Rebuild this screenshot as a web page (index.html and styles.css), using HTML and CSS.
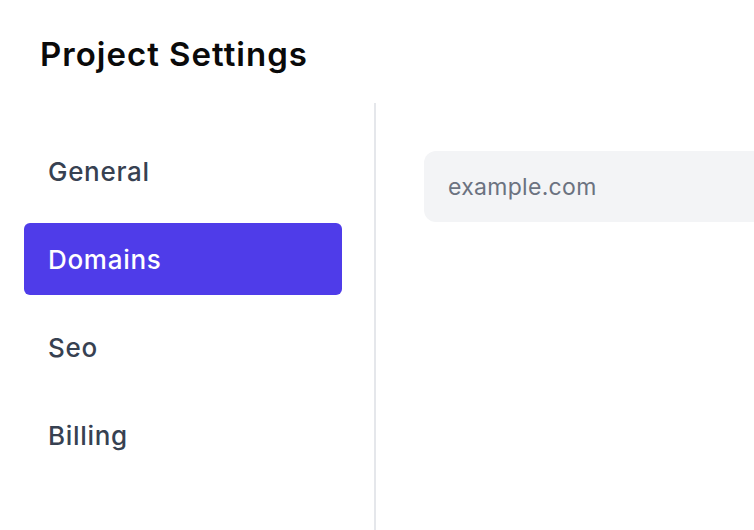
FILE: index.html
```html
<!DOCTYPE html>
<html lang="en">
<head>
<meta charset="utf-8">
<title>Project Settings</title>
<link rel="stylesheet" href="styles.css">
</head>
<body>
<div class="page">
  <header class="page-header">
    <h1 class="page-title">Project Settings</h1>
  </header>
  <div class="layout">
    <aside class="sidebar">
      <nav class="nav">
        <a class="nav-item" href="#">General</a>
        <a class="nav-item is-active" href="#">Domains</a>
        <a class="nav-item" href="#">Seo</a>
        <a class="nav-item" href="#">Billing</a>
      </nav>
    </aside>
    <main class="content">
      <input class="domain-input" type="text" placeholder="example.com">
    </main>
  </div>
</div>
</body>
</html>
```

FILE: styles.css
```css
html, body {
  margin: 0;
  padding: 0;
  height: 100%;
  background: #ffffff;
  overflow: hidden;
}

body {
  font-family: Inter, "Noto Sans", "Liberation Sans", sans-serif;
  -webkit-font-smoothing: antialiased;
}

.page {
  height: 100%;
  display: flex;
  flex-direction: column;
}

.page-header {
  padding: 34px 0 0 40px;
}

.page-title {
  margin: 0;
  font-size: 33px;
  line-height: 40px;
  font-weight: 600;
  color: #0a0a0a;
  letter-spacing: 1px;
}

.layout {
  margin-top: 29px;
  flex: 1;
  display: flex;
  min-height: 0;
}

.sidebar {
  width: 350px;
  flex: 0 0 350px;
  padding-left: 24px;
  border-right: 2px solid #e5e7eb;
}

.nav {
  width: 318px;
  padding-top: 32px;
  display: flex;
  flex-direction: column;
  gap: 16px;
}

.nav-item {
  display: flex;
  align-items: center;
  height: 72px;
  padding-left: 24px;
  border-radius: 6px;
  font-size: 26px;
  font-weight: 500;
  letter-spacing: 0.7px;
  color: #374151;
  text-decoration: none;
}

.nav-item.is-active {
  background: #4f3ce9;
  color: #ffffff;
}

.content {
  flex: 1;
  padding: 48px 0 0 48px;
  min-width: 0;
  overflow: hidden;
}

.domain-input {
  display: block;
  box-sizing: border-box;
  width: 420px;
  height: 71px;
  padding: 0 0 0 24px;
  border: none;
  border-radius: 12px 0 0 12px;
  background: #f3f4f6;
  font-family: inherit;
  font-size: 23px;
  letter-spacing: 0.3px;
  color: #111827;
  outline: none;
}

.domain-input::placeholder {
  color: #6b7280;
  opacity: 1;
}
```
